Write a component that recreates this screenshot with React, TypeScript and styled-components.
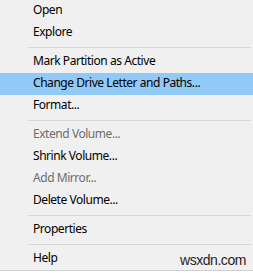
import * as React from 'react';
import styled, { createGlobalStyle } from 'styled-components';

type Entry = { label: string; disabled?: boolean; active?: boolean } | 'separator';

const entries: Entry[] = [
    { label: 'Open' },
    { label: 'Explore' },
    'separator',
    { label: 'Mark Partition as Active' },
    { label: 'Change Drive Letter and Paths...', active: true },
    { label: 'Format...' },
    'separator',
    { label: 'Extend Volume...', disabled: true },
    { label: 'Shrink Volume...' },
    { label: 'Add Mirror...', disabled: true },
    { label: 'Delete Volume...' },
    'separator',
    { label: 'Properties' },
    'separator',
    { label: 'Help' },
];

const App = () => {
    return (
        <>
            <GlobalStyle />
            <DivMenu>
                {entries.map((entry, i) =>
                    entry === 'separator' ? (
                        <DivSeparator key={i} />
                    ) : (
                        <DivItem key={i} $active={entry.active} $disabled={entry.disabled}>
                            {entry.label}
                        </DivItem>
                    )
                )}
                <SpanWatermark>wsxdn.com</SpanWatermark>
            </DivMenu>
        </>
    );
};

const GlobalStyle = createGlobalStyle`
    html, body {
        margin: 0;
        padding: 0;
        background: #ffffff;
    }
`;

const DivMenu = styled.div`
    position: relative;
    width: 253px;
    height: 270px;
    background: #f0f0f0;
    border-bottom: 1px solid #cfcfcf;
    font-family: 'Noto Sans', 'Open Sans', sans-serif;
    font-size: 12px;
    letter-spacing: -0.45px;
    display: flex;
    flex-direction: column;
`;

const DivItem = styled.div<{ $active?: boolean; $disabled?: boolean }>`
    height: 22px;
    line-height: 19px;
    padding-left: 33px;
    color: ${(p) => (p.$disabled ? '#6d6d6d' : '#000000')};
    background: ${(p) => (p.$active ? '#91c9f7' : 'transparent')};
    white-space: nowrap;
`;

const DivSeparator = styled.div`
    height: 7px;
    display: flex;
    align-items: center;
    padding-left: 28px;
    padding-right: 2px;

    &::after {
        content: '';
        flex: 1;
        height: 1px;
        background: #d7d7d7;
    }
`;

const SpanWatermark = styled.span`
    position: absolute;
    left: 180px;
    top: 252px;
    font-family: 'Liberation Sans', Arial, sans-serif;
    font-size: 14px;
    color: #1e1e1e;
`;

export default App;
